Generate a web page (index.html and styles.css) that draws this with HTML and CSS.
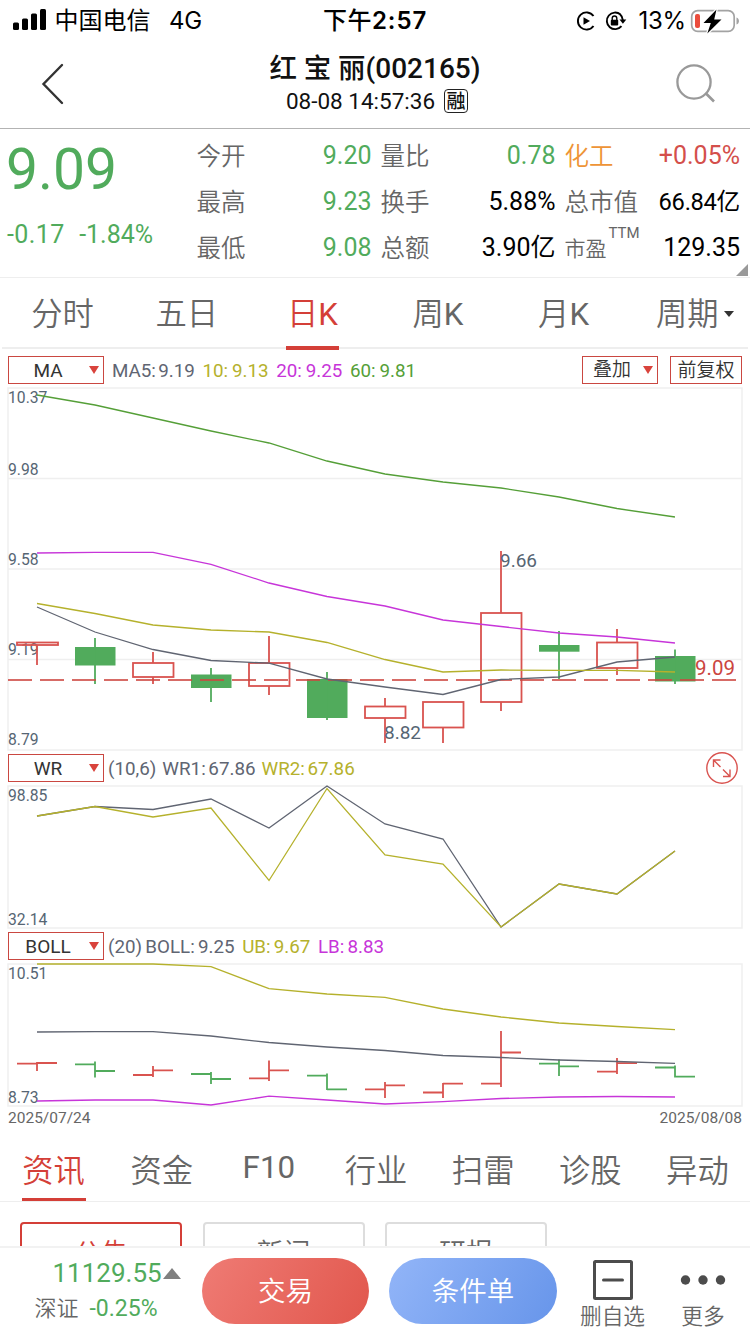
FILE: index.html
```html
<!DOCTYPE html>
<html lang="zh-CN">
<head>
<meta charset="utf-8">
<title>红宝丽 002165</title>
<link rel="stylesheet" href="styles.css">
</head>
<body>
<div class="screen">
  <header class="status">
    <div class="status-left">
      <svg class="signal" width="34" height="22" viewBox="0 0 34 22"><rect x="0" y="13.500" width="6" height="7.500" rx="1.500"/><rect x="9" y="9.500" width="6" height="11.500" rx="1.500"/><rect x="18" y="4.500" width="6" height="16.500" rx="1.500"/><rect x="27" y="0" width="6" height="21" rx="1.500"/></svg>
      <span class="carrier">中国电信</span><span class="net">4G</span>
    </div>
    <div class="clock">下午<span class="clock-num">2:57</span></div>
    <div class="status-right">
      <svg width="20" height="20" viewBox="0 0 20 20"><path d="M17.500 5A8.600 8.600 0 1 0 17.500 15" fill="none" stroke="#000" stroke-width="1.900"/><path d="M7.500 6.200v7.600l6.500-3.800z"/></svg>
      <svg class="lock" width="22" height="20" viewBox="0 0 22 20"><path d="M15.500 3.500A8.300 8.300 0 1 0 16.500 15.200M15 3.200A8.300 8.300 0 0 1 17.800 9" fill="none" stroke="#000" stroke-width="1.900"/><path d="M14.500 8.500h6.800l-3.400 4.200z"/><rect x="5.800" y="8.800" width="7.400" height="5.700" rx="1"/><path d="M7.200 9V7.300a2.300 2.300 0 0 1 4.600 0V9" fill="none" stroke="#000" stroke-width="1.400"/></svg>
      <span class="percent">13%</span>
      <svg class="battery" width="50" height="26" viewBox="0 0 50 26"><rect x="1.700" y="2.700" width="42.500" height="20.600" rx="6" fill="none" stroke="#a3a3a3" stroke-width="1.700"/><path d="M46.500 9.500c3.300 1 3.300 6 0 7z" fill="#a3a3a3"/><rect x="5" y="6" width="5" height="14" rx="2" fill="#eb4d3d"/><path d="M26.500 1.500L13.500 15h7.300l-3.500 10.500L31.500 11.500h-7.300z" stroke="#fff" stroke-width="2.500" paint-order="stroke"/></svg>
    </div>
  </header>

  <nav class="nav">
    <svg class="back" width="24" height="42" viewBox="0 0 24 42"><path d="M21 2L2.500 21 21 40" fill="none" stroke="#333" stroke-width="2.400" stroke-linecap="round"/></svg>
    <div class="heading">
      <h1 class="name">红 宝 丽<span class="code">(002165)</span></h1>
      <div class="stamp"><span>08-08 14:57:36</span><span class="margin-tag">融</span></div>
    </div>
    <svg class="search" width="42" height="42" viewBox="0 0 42 42"><circle cx="19" cy="19" r="16.600" fill="none" stroke="#999" stroke-width="2.300"/><path d="M30.500 30L39 38.500" stroke="#999" stroke-width="2.600"/></svg>
  </nav>

  <section class="quote">
    <div class="price-block"><div class="price">9.09</div><div class="change"><span>-0.17</span><span>-1.84%</span></div></div>
    <dl class="stats">
      <dt>今开</dt><dd class="down">9.20</dd><dt>量比</dt><dd class="down">0.78</dd><dt class="sector">化工</dt><dd class="up">+0.05%</dd>
      <dt>最高</dt><dd class="down">9.23</dd><dt>换手</dt><dd>5.88%</dd><dt>总市值</dt><dd class="cap">66.84亿</dd>
      <dt>最低</dt><dd class="down">9.08</dd><dt>总额</dt><dd>3.90亿</dd><dt class="pe">市盈<sup>TTM</sup></dt><dd>129.35</dd>
    </dl>
    <i class="corner"></i>
  </section>

  <div class="periods">
    <span class="period">分时</span><span class="period">五日</span><span class="period active">日<b>K</b></span><span class="period">周<b>K</b></span><span class="period">月<b>K</b></span><span class="period last">周期<i class="caret"></i></span>
  </div>

  <div class="ind-row first">
    <div class="picker"><span>MA</span><i class="tri"></i></div>
    <div class="legend ma"><span class="gray">MA5: 9.19</span><span class="olive">10: 9.13</span><span class="purple">20: 9.25</span><span class="green">60: 9.81</span></div>
    <div class="tools"><div class="tool overlay"><span>叠加</span><i class="tri"></i></div><div class="tool">前复权</div></div>
  </div>

  <svg class="chart" width="750" height="366" viewBox="0 386 750 366">
    <g class="frame"><rect x="8" y="388" width="734" height="362"/><path d="M8 478.500H742M8 569H742M8 659.500H742"/></g>
    <g class="axis"><text x="8" y="403">10.37</text><text x="8" y="475">9.98</text><text x="8" y="565">9.58</text><text x="8" y="655">9.19</text><text x="8" y="745">8.79</text></g>
    <g class="k-up"><rect x="17" y="642.500" width="41" height="2.500"/><path d="M37 645V665"/>
      <rect x="133" y="663" width="40.500" height="14"/><path d="M153 652V663M153 677V684"/>
      <rect x="249" y="663" width="40.500" height="23"/><path d="M269 636V663M269 686V695"/>
      <rect x="365" y="706.500" width="40.500" height="11.500"/><path d="M385 698V706M385 718V743"/>
      <rect x="423" y="702" width="40.500" height="25.500"/><path d="M443 727V743"/>
      <rect x="481" y="613" width="40.500" height="89"/><path d="M501 551V613M501 702V711"/>
      <rect x="597" y="642.500" width="40.500" height="25.500"/><path d="M617 629V642M617 668V675"/></g>
    <g class="k-down"><rect x="75" y="647" width="40.500" height="18.500"/><path d="M95 638V684"/>
      <rect x="191" y="674.500" width="40.500" height="13.500"/><path d="M211 668V702"/>
      <rect x="307" y="679" width="40.500" height="39"/><path d="M327 672V720"/>
      <rect x="539" y="645" width="40.500" height="6.700"/><path d="M559 631V679"/>
      <rect x="655" y="656" width="40.500" height="25.500"/><path d="M675 649.500V684"/></g>
    <path class="last-price" d="M8 680H736"/>
    <g class="line"><polyline class="s-gray" points="37,607 95,632 153,649.500 211,660.500 269,663.200 327,679 385,687 443,694.500 501,679.500 559,677 617,662 675,657"/>
      <polyline class="s-olive" points="37,603.500 95,613.500 153,625 211,630 269,632 327,642.500 385,659.500 443,672 501,670 559,670.300 617,670.300 675,672"/>
      <polyline class="s-purple" points="37,553 95,552.300 153,552.300 211,564.300 269,583 327,596.500 385,606 443,620 501,626.500 559,633 617,637 675,643"/>
      <polyline class="s-green" points="37,395 95,405 153,418 211,431 269,443 327,461 385,474 443,482 501,488 559,497 617,508.500 675,517"/></g>
    <g class="mark"><text x="500" y="567">9.66</text><text x="384" y="738.500">8.82</text></g><text class="now" x="695" y="675">9.09</text>
  </svg>

  <div class="ind-row">
    <div class="picker"><span>WR</span><i class="tri"></i></div>
    <div class="legend wr"><span class="gray">(10,6)</span><span class="gray">WR1: 67.86</span><span class="olive">WR2: 67.86</span></div>
    <svg class="expand" width="34" height="34" viewBox="0 0 34 34"><g fill="none" stroke="#d9534f" stroke-width="1.400"><circle cx="17" cy="17" r="15.200"/><path d="M15.500 16L8.500 9M8.500 16V9h7M18 18.500l7 7M25 18.500v7h-7"/></g></svg>
  </div>

  <svg class="chart" width="750" height="146" viewBox="0 784 750 146">
    <g class="frame"><rect x="8" y="786" width="734" height="142"/></g>
    <g class="axis"><text x="8" y="801">98.85</text><text x="8" y="925">32.14</text></g>
    <g class="line"><polyline class="s-gray" points="37,816 95,806.500 153,809.500 211,799 269,828 327,786 385,824 443,839 501,927 559,884 617,894 675,851"/>
      <polyline class="s-olive" points="37,816 95,806.500 153,817 211,808 269,880.500 327,788.500 385,855 443,864 501,927 559,884 617,894 675,851"/></g>
  </svg>

  <div class="ind-row">
    <div class="picker"><span>BOLL</span><i class="tri"></i></div>
    <div class="legend boll"><span class="gray">(20) BOLL: 9.25</span><span class="olive">UB: 9.67</span><span class="purple">LB: 8.83</span></div>
  </div>

  <svg class="chart" width="750" height="146" viewBox="0 962 750 146">
    <g class="frame"><rect x="8" y="964" width="734" height="142"/></g>
    <g class="axis"><text x="8" y="979">10.51</text><text x="8" y="1103">8.73</text></g>
    <g class="k-up"><path d="M17 1063.700H37M37 1063H57M37 1062V1071M133 1075H153M153 1070.300H173M153 1066V1077M249 1078.300H269M269 1070.300H289M269 1060.500V1081M365 1089.300H385M385 1085.300H405M385 1082V1098M423 1092.500H443M443 1083.700H463M443 1083V1098M481 1083.700H501M501 1052.500H521M501 1031V1087M597 1071.700H617M617 1063.200H637M617 1058V1074"/></g>
    <g class="k-down"><path d="M75 1064.300H95M95 1071H115M95 1061.500V1077.500M191 1074H211M211 1079H231M211 1072V1084M307 1075.700H327M327 1089.300H347M327 1073.500V1090M539 1063.700H559M559 1066.300H579M559 1059.500V1076M655 1067.500H675M675 1076.700H695M675 1065.500V1077.500"/></g>
    <g class="line"><polyline class="s-gray" points="37,1032 95,1031.700 153,1031.700 211,1036 269,1042.500 327,1047 385,1050.500 443,1055.500 501,1057.500 559,1060 617,1061.500 675,1063.300"/>
      <polyline class="s-olive" points="37,964 95,964 153,964 211,966.700 269,988.700 327,994 385,997.300 443,1009 501,1017 559,1023 617,1026.500 675,1029.700"/>
      <polyline class="s-purple" points="37,1101 95,1100 153,1100 211,1105 269,1096.200 327,1100 385,1104 443,1101.700 501,1098.500 559,1097 617,1096.500 675,1097"/></g>
  </svg>
  <div class="dates"><span>2025/07/24</span><span>2025/08/08</span></div>

  <div class="topics">
    <span class="topic active">资讯</span><span class="topic">资金</span><span class="topic latin">F10</span><span class="topic">行业</span><span class="topic">扫雷</span><span class="topic">诊股</span><span class="topic">异动</span>
  </div>
  <div class="chips"><span class="chip active">公告</span><span class="chip">新闻</span><span class="chip">研报</span></div>

  <footer class="bottom">
    <div class="index"><div class="index-value">11129.55<i class="rise"></i></div><div class="index-change"><span>深证</span><span class="down pct">-0.25%</span></div></div>
    <button class="action trade">交易</button><button class="action cond">条件单</button>
    <div class="item remove"><svg width="42" height="42" viewBox="0 0 42 42"><rect x="2.500" y="2.500" width="37" height="37" rx="1" fill="none" stroke="#4c4c4c" stroke-width="3"/><path d="M11.500 21h19" stroke="#4c4c4c" stroke-width="3" stroke-linecap="round"/></svg><span>删自选</span></div>
    <div class="item more"><svg width="46" height="42" viewBox="0 0 46 42"><g fill="#4c4c4c"><circle cx="5.500" cy="21" r="4.700"/><circle cx="23" cy="21" r="4.700"/><circle cx="40.500" cy="21" r="4.700"/></g></svg><span>更多</span></div>
  </footer>
</div>
</body>
</html>
```
FILE: styles.css
```css
* { box-sizing: border-box; }
body { margin: 0; background: #fff; }
.screen { width: 750px; height: 1334px; overflow: hidden; display: flex; flex-direction: column; background: #fff; color: #666; font-family: Roboto, "Noto Sans CJK SC", sans-serif; }
.screen > * { flex: none; }
i { font-style: normal; }

.status { height: 42px; display: grid; grid-template-columns: 1fr auto 1fr; color: #000; font-family: Inter, "Noto Sans CJK SC", sans-serif; font-size: 24px; line-height: 42px; }
.status-left { display: flex; padding-left: 13px; }
.signal { margin-top: 9px; }
.carrier { margin-left: 7.500px; }
.net { margin-left: 18.500px; letter-spacing: -.3px; }
.clock { font-weight: 500; width: 104px; white-space: nowrap; letter-spacing: .5px; }
.clock-num { font-weight: 600; letter-spacing: .9px; }
.status-right { display: flex; justify-content: flex-end; align-items: center; padding-right: 10px; height: 41px; }
.lock { margin-left: 9px; }
.percent { margin-left: 11px; font-size: 24px; letter-spacing: -.2px; }
.battery { margin-left: 4px; }

.nav { height: 87px; border-bottom: 1px solid #b3b3b3; display: flex; justify-content: space-between; padding: 0 33px 0 41px; color: #111; }
.back { margin-top: 21px; }
.search { margin-top: 21px; }
.heading { width: 240px; margin-left: 10px; display: flex; flex-direction: column; align-items: center; }
.name { margin: 8px 0 0; height: 37px; font-size: 27.500px; line-height: 38px; font-weight: 500; white-space: nowrap; }
.code { font-size: 28px; }
.stamp { display: flex; align-items: center; height: 28px; font-size: 22.500px; gap: 9px; margin-left: 4px; white-space: nowrap; }
.margin-tag { width: 24px; height: 24px; border: 1.500px solid #222; border-radius: 4px; font-size: 19px; line-height: 22px; display: flex; justify-content: center; font-weight: 500; padding-top: 1px; }

.quote { position: relative; height: 149px; border-bottom: 1px solid #eee; display: flex; font-size: 25px; }
.price-block { width: 196.500px; padding-left: 6px; color: #51ab5c; }
.price { font-size: 57px; line-height: 68px; margin-top: 7px; }
.change { display: flex; gap: 14.500px; margin-top: 15px; line-height: 32px; letter-spacing: .4px; padding-left: 1px; }
.change span + span { letter-spacing: 0; }
.stats { margin: 4px 0 0; display: grid; grid-template-columns: 74px 101px 84px 100px 83.500px 101px; grid-auto-rows: 46px; align-items: center; line-height: 46px; }
.stats dt { font-size: 24.500px; font-weight: 350; padding-top: 2px; white-space: nowrap; }
.stats dt:nth-of-type(3n+2), .stats dt:nth-of-type(3n) { padding-left: 9px; }
.stats dd { margin: 0; color: #000; text-align: right; white-space: nowrap; }
.stats .down, .down { color: #51ab5c; }
.stats .up { color: #d44f4b; }
.stats .sector { color: #ee9436; }
.stats .cap { font-size: 23.700px; letter-spacing: -.3px; }
.stats .pe { display: flex; font-size: 21px; white-space: nowrap; }
.pe sup { font-size: 15px; font-weight: 400; line-height: 16px; margin: -1px 0 0 2px; align-self: flex-start; }
.corner { position: absolute; right: 2px; bottom: 1px; border-left: 12px solid transparent; border-bottom: 12px solid #999; }

.periods { height: 71px; margin: 0 2px 1px; border-bottom: 2px solid #eee; display: flex; font-size: 31.300px; font-weight: 350; line-height: 74px; }
.period { width: 125.600px; display: flex; justify-content: center; position: relative; }
.period b { font-weight: 400; }
.period:first-child { width: 121px; margin-right: 1px; }
.period.last { width: 119px; padding-left: 29.500px; justify-content: flex-start; align-items: flex-start; }
.period.active, .topic.active { color: #d43f38; }
.period.active::after { content: ""; position: absolute; bottom: -3px; width: 53px; height: 4px; background: #d43f38; }
.caret { border: 5px solid transparent; border-top: 6px solid #333; border-bottom: 0; margin: 33px 0 0 6px; }

.ind-row { height: 32px; padding: 2px 8px; display: flex; align-items: center; font-size: 19px; position: relative; }
.ind-row.first { height: 36px; padding-top: 6px; }
.picker { width: 96px; height: 28px; border: 1px solid #ca4741; color: #333; display: flex; align-items: center; position: relative; }
.picker span { width: 78px; text-align: center; }
.tri { border: 5.500px solid transparent; border-top: 8px solid #d9433c; border-bottom: 0; }
.picker .tri { position: absolute; right: 4px; top: 9px; }
.legend { display: flex; white-space: nowrap; word-spacing: -2px; font-size: 18.800px; line-height: 22px; padding-top: 2px; }
.ma { margin-left: 8px; }
.ma span { width: 73.700px; word-spacing: -.8px; }
.ma .gray { width: 90.500px; word-spacing: -2.400px; }
.wr, .boll { margin-left: 4px; gap: 6px; }
.boll { gap: 7.500px; word-spacing: -1.400px; }
.gray { color: #606572; }
.olive { color: #b5b12c; }
.purple { color: #c735d9; }
.green { color: #559f38; }
.tools { display: flex; margin-left: auto; gap: 12px; color: #333; }
.tool { border: 1px solid #ca4741; height: 28px; width: 72px; line-height: 28px; text-align: center; font-weight: 350; white-space: nowrap; }
.overlay { width: 76px; display: flex; justify-content: space-between; align-items: center; padding: 0 4px 0 10px; }
.expand { margin-left: auto; margin-right: 3px; }

.chart { display: block; }
.chart text { font-family: Roboto, sans-serif; }
.frame rect, .frame path { fill: none; stroke: #efefef; stroke-width: 1.500; }
.axis { font-size: 15.700px; fill: #566573; }
.mark { font-size: 19px; fill: #566573; }
.now { font-size: 20.500px; fill: #cb453f; }
.line polyline { fill: none; stroke-width: 1.300; }
.s-gray { stroke: #606572; }
.s-olive { stroke: #b5b12c; }
.s-purple { stroke: #c735d9; }
.s-green { stroke: #559f38; }
.k-up { fill: none; stroke: #d9534f; stroke-width: 1.800; }
.k-down { fill: none; stroke: #51ab5c; stroke-width: 1.800; }
.k-down rect { fill: #51ab5c; stroke: none; }
.last-price { stroke: #cd4640; stroke-opacity: .8; stroke-width: 1.800; stroke-dasharray: 24 8; }
.dates { height: 28px; padding: 0 8px; display: flex; justify-content: space-between; font-size: 15.500px; line-height: 21px; }

.topics { height: 66px; border-bottom: 1px solid #eee; display: flex; font-size: 31.300px; font-weight: 350; line-height: 72px; }
.topic { width: 107.400px; display: flex; justify-content: center; position: relative; }
.topic + .topic { padding-left: 2px; }
.topic.active::after { content: ""; position: absolute; bottom: 0; width: 64px; height: 3px; background: #d43f38; }
.topic.latin { font-weight: 400; line-height: 63px; }
.chips { height: 44px; padding: 20px 20px 0; display: flex; gap: 20.500px; overflow: hidden; }
.chip { flex: none; width: 162px; height: 64px; border: 2px solid #ddd; border-radius: 4px; text-align: center; font-size: 27px; line-height: 60px; font-weight: 350; }
.chip.active { border-color: #d43f38; color: #d43f38; }

.bottom { height: 88px; border-top: 2px solid #f2f2f2; display: flex; background: #fff; }
.index { width: 202px; }
.index-value { color: #51ab5c; font-size: 26px; line-height: 30px; margin-top: 10px; padding-left: 52.500px; display: flex; align-items: center; }
.rise { border: 9px solid transparent; border-bottom: 11px solid #808080; border-top: 0; margin-left: 1px; }
.index-change { display: flex; padding-left: 34.500px; font-size: 22px; line-height: 36px; margin-top: 3px; font-weight: 350; align-items: center; }
.pct { font-size: 23px; margin-left: 11px; font-weight: 400; }
.action { border: 0; padding: 2px 0 0; width: 167px; height: 66px; border-radius: 33px; margin: 10px 20px 0 0; color: #fff; font: 350 27.500px/64px Roboto, "Noto Sans CJK SC", sans-serif; }
.trade { background: linear-gradient(120deg, #ef7b74, #e1574d); }
.cond { width: 168px; background: linear-gradient(120deg, #92b5f8, #6795ea); }
.item { display: flex; flex-direction: column; align-items: center; padding-top: 11px; font-size: 21.700px; font-weight: 350; line-height: 32px; width: 68px; margin-left: 1.500px; }
.item.more { margin-left: 22.500px; }
```
